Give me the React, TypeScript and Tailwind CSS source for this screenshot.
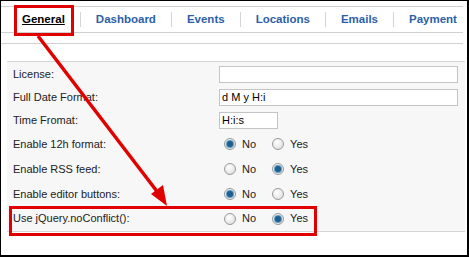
import React from 'react';

const tabs = ['General', 'Dashboard', 'Events', 'Locations', 'Emails', 'Payment'];

type Row =
  | { label: string; h: string; kind: 'text'; value: string; wide: boolean }
  | { label: string; h: string; kind: 'radio'; yes: boolean };

const rows: Row[] = [
  { label: 'License:', h: 'h-[24px]', kind: 'text', value: '', wide: true },
  { label: 'Full Date Format:', h: 'h-[23px]', kind: 'text', value: 'd M y H:i', wide: true },
  { label: 'Time Fromat:', h: 'h-[23px]', kind: 'text', value: 'H:i:s', wide: false },
  { label: 'Enable 12h format:', h: 'h-[24px]', kind: 'radio', yes: false },
  { label: 'Enable RSS feed:', h: 'h-[26px]', kind: 'radio', yes: true },
  { label: 'Enable editor buttons:', h: 'h-[24px]', kind: 'radio', yes: false },
  { label: 'Use jQuery.noConflict():', h: 'h-[25px]', kind: 'radio', yes: true },
];

function Radio({ on }: { on: boolean }) {
  return (
    <span className="w-[12px] h-[12px] rounded-full border border-[#9a9a9a] bg-[radial-gradient(circle_at_40%_35%,#ffffff,#d8d8d8)] flex items-center justify-center shrink-0">
      {on && <span className="w-[6px] h-[6px] rounded-full bg-[#1f5f8f] ring-1 ring-[#5a9bc8]" />}
    </span>
  );
}

export default function App() {
  return (
    <div className="relative w-[469px] h-[257px] bg-white border-l border-t border-r-2 border-b-2 border-black overflow-hidden font-['Liberation_Sans',Arial,sans-serif] text-[11px] text-[#222]">
      <div className="mt-[5px] w-[462px] h-[27px] border-y border-[#d0d0d0] flex items-center pl-[6px]">
        {tabs.map((t, i) => (
          <div key={t} className="flex items-center">
            {i > 0 && <span className="w-px h-[15px] bg-[#d4d4d4]" />}
            <span
              className={`px-[15px] font-bold text-[11.5px] ${
                i === 0 ? 'text-black underline' : 'text-[#2d5fa8]'
              }`}
            >
              {t}
            </span>
          </div>
        ))}
      </div>

      <div className="mt-[10px] w-[462px] border-t border-[#d0d0d0]" />

      <div className="mt-[17px] ml-[6px] w-[458px] bg-[#f7f7f7] border-t border-b border-[#d6d6d6]">
        {rows.map((r) => (
          <div key={r.label} className={`${r.h} flex items-center`}>
            <div className="w-[212px] pl-[6px]">{r.label}</div>
            {r.kind === 'text' ? (
              <div
                className={`h-[17px] border border-[#c4c4c4] bg-white flex items-center px-[2px] text-[11px] text-black ${
                  r.wide ? 'w-[239px]' : 'w-[59px]'
                }`}
              >
                {r.value}
              </div>
            ) : (
              <div className="flex items-center pl-[5px]">
                <Radio on={!r.yes} />
                <span className="ml-[6px] mr-[16px]">No</span>
                <Radio on={r.yes} />
                <span className="ml-[6px]">Yes</span>
              </div>
            )}
          </div>
        ))}
      </div>

      <div className="absolute left-[13px] top-[4px] w-[60px] h-[31px] border-[3px] border-[#e00000]" />
      <div className="absolute left-[8px] top-[205px] w-[308px] h-[30px] border-[3px] border-[#e00000]" />

      <svg className="absolute left-0 top-0" width="469" height="257" viewBox="0 0 469 257">
        <line x1="37" y1="35" x2="158" y2="193" stroke="#e00000" strokeWidth="3.5" />
        <polygon points="166,205 150,193 162,184" fill="#e00000" />
      </svg>
    </div>
  );
}
